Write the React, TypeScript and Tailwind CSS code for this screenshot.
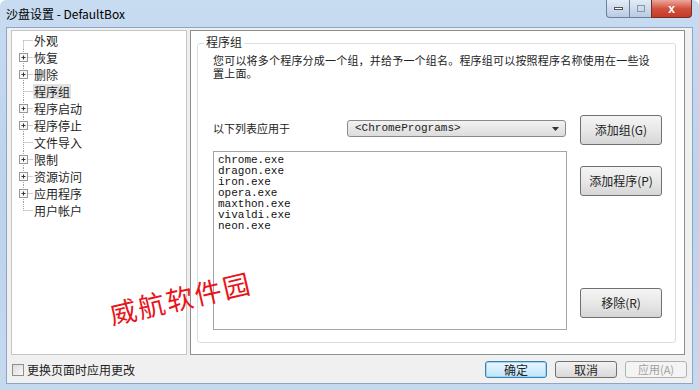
import { useState } from 'react';

const cjk = "font-['Noto_Sans_CJK_SC',sans-serif]";
const mono = "font-['Liberation_Mono','Noto_Sans_CJK_SC',monospace]";

type TreeItem = { label: string; plus: boolean };

const treeItems: TreeItem[] = [
    { label: '外观', plus: false },
    { label: '恢复', plus: true },
    { label: '删除', plus: true },
    { label: '程序组', plus: false },
    { label: '程序启动', plus: true },
    { label: '程序停止', plus: true },
    { label: '文件导入', plus: false },
    { label: '限制', plus: true },
    { label: '资源访问', plus: true },
    { label: '应用程序', plus: true },
    { label: '用户帐户', plus: false },
];

const programs = ['chrome.exe', 'dragon.exe', 'iron.exe', 'opera.exe', 'maxthon.exe', 'vivaldi.exe', 'neon.exe'];

// Tree connector lines + expand box
const TreeGlyph = ({ first, last, plus }: { first: boolean; last: boolean; plus: boolean }) => (
    <svg width="20" height="17" viewBox="0 0 20 17" className="shrink-0">
        <line x1="10.5" y1={first ? 8.5 : 0} x2="10.5" y2={last ? 8.5 : 17} stroke="#a0a0a0" strokeDasharray="1 1" />
        <line x1="10.5" y1="8.5" x2="20" y2="8.5" stroke="#a0a0a0" strokeDasharray="1 1" />
        {plus && (
            <g>
                <rect x="6.5" y="4.5" width="8" height="8" fill="#f7f7f7" stroke="#989898" />
                <line x1="8.5" y1="8.5" x2="12.5" y2="8.5" stroke="#333" />
                <line x1="10.5" y1="6.5" x2="10.5" y2="10.5" stroke="#333" />
            </g>
        )}
    </svg>
);

const WinButton = ({ label, className = '' }: { label: string; className?: string }) => (
    <button className={`w-[82px] h-[30px] rounded-[3px] border border-[#707070] bg-gradient-to-b from-[#f4f4f4] via-[#e8e8e8] to-[#d6d6d6] text-[12px] text-[#222] ${cjk} ${className}`}>
        {label}
    </button>
);

export default function App() {
    const [selected, setSelected] = useState('程序组');
    const [applyOnSwitch, setApplyOnSwitch] = useState(false);

    return (
        <div className="relative w-[699px] h-[390px] overflow-hidden bg-gradient-to-b from-[#c7dbf1] via-[#bcd3ec] to-[#c6d9ef] rounded-t-[6px]">
            {/* Title bar */}
            <div className={`h-[27px] pl-[6px] pt-[5px] text-[12px] text-black ${cjk}`}>沙盘设置 - DefaultBox</div>

            {/* Caption buttons */}
            <div className="absolute top-0 right-[7px] flex h-[18px]">
                <div className="w-[24px] h-full border border-[#6d7f99] border-t-0 rounded-bl-[4px] bg-gradient-to-b from-[#e3ecf7] to-[#b9cbe2] flex items-center justify-center">
                    <div className="w-[9px] h-[3px] border border-[#555] bg-white" />
                </div>
                <div className="w-[21px] h-full border-y border-[#6d7f99] border-t-0 bg-gradient-to-b from-[#e3ecf7] to-[#b9cbe2] flex items-center justify-center">
                    <div className="w-[8px] h-[7px] border border-[#8a98ad]" />
                </div>
                <div className="w-[41px] h-full border border-[#7a2b22] border-t-0 rounded-br-[4px] bg-gradient-to-b from-[#e9a79c] via-[#d2513e] to-[#c43a26] flex items-center justify-center">
                    <span className="text-white text-[12px] font-bold leading-none font-['Liberation_Sans',sans-serif]">x</span>
                </div>
            </div>

            {/* Client area */}
            <div className="mx-[6px] h-[357px] bg-[#f0f0f0] border border-[#8ea6c4] flex flex-col">
                <div className="flex pt-[2px] pl-[4px] gap-[3px]">
                    {/* Tree */}
                    <div className={`w-[176px] h-[325px] bg-white border border-[#c6c6c6] pt-[1px] pl-[1px] text-[12px] ${cjk}`}>
                        {treeItems.map((item, i) => (
                            <div key={item.label} className="flex items-center h-[17px] cursor-default" onClick={() => setSelected(item.label)}>
                                <TreeGlyph first={i === 0} last={i === treeItems.length - 1} plus={item.plus} />
                                <span className={`px-[1px] leading-[15px] text-[#1e1e1e] ${selected === item.label ? 'bg-[#e3e3e3]' : ''}`}>{item.label}</span>
                            </div>
                        ))}
                    </div>

                    {/* Right page */}
                    <div className="w-[495px] h-[325px] bg-white border border-[#8e8f8f] pt-[12px] pl-[6px] pr-[8px]">
                        <div className="relative h-[300px] border border-[#d5dfe5] rounded-[3px] flex flex-col pl-[15px] pr-[12px]">
                            <span className={`absolute -top-[9px] left-[6px] bg-white px-[2px] text-[12px] leading-[14px] text-[#1e1e1e] ${cjk}`}>程序组</span>

                            <div className={`mt-[10px] h-[26px] whitespace-nowrap text-[11px] leading-[13px] tracking-[0.2px] text-[#222] ${cjk}`}>
                                <div>您可以将多个程序分成一个组，并给予一个组名。程序组可以按照程序名称使用在一些设</div>
                                <div>置上面。</div>
                            </div>

                            <div className="flex">
                                <div className="w-[354px] flex flex-col">
                                    <div className="mt-[40px] flex items-center h-[17px]">
                                        <span className={`w-[134px] text-[11px] text-[#222] ${cjk}`}>以下列表应用于</span>
                                        <div className="w-[219px] h-[17px] rounded-[3px] border border-[#8a8a8a] bg-gradient-to-b from-[#f3f3f3] to-[#dcdcdc] flex items-center pl-[7px] pr-[6px]">
                                            <span className={`flex-1 text-[11px] leading-none text-[#222] ${mono}`}>&lt;ChromePrograms&gt;</span>
                                            <svg width="7" height="4" viewBox="0 0 7 4"><path d="M0 0h7L3.5 4z" fill="#333" /></svg>
                                        </div>
                                    </div>

                                    <div className={`mt-[14px] h-[179px] border border-[#a5a5a5] bg-white pl-[4px] pt-[3px] text-[11px] leading-[11px] text-[#111] ${mono}`}>
                                        {programs.map((p) => (
                                            <div key={p}>{p}</div>
                                        ))}
                                    </div>
                                </div>

                                <div className="ml-[13px] flex flex-col">
                                    <WinButton label="添加组(G)" className="mt-[35px]" />
                                    <WinButton label="添加程序(P)" className="mt-[21px]" />
                                    <WinButton label="移除(R)" className="mt-[92px]" />
                                </div>
                            </div>
                        </div>
                    </div>
                </div>

                {/* Bottom bar */}
                <div className="flex items-center mt-[6px] pl-[5px] pr-[5px] h-[17px]">
                    <label className={`flex items-center gap-[3px] text-[12px] text-[#222] ${cjk}`}>
                        <span
                            className="w-[12px] h-[12px] border border-[#8f8f8f] bg-gradient-to-br from-[#dcdcdc] to-[#f8f8f8]"
                            onClick={() => setApplyOnSwitch(!applyOnSwitch)}
                        />
                        更换页面时应用更改
                    </label>
                    <div className="flex-1" />
                    <button className={`w-[62px] h-[17px] rounded-[3px] border border-[#3c7fb1] bg-gradient-to-b from-[#eaf6fd] to-[#bee6fd] text-[12px] leading-none text-[#222] shadow-[inset_0_0_0_1px_#9fd5f5] ${cjk}`}>确定</button>
                    <button className={`ml-[8px] w-[62px] h-[17px] rounded-[3px] border border-[#707070] bg-gradient-to-b from-[#f2f2f2] to-[#d9d9d9] text-[12px] leading-none text-[#222] ${cjk}`}>取消</button>
                    <button className={`ml-[8px] w-[62px] h-[17px] rounded-[3px] border border-[#adb2b5] bg-[#f4f4f4] text-[11px] leading-none text-[#a0a0a0] ${cjk}`}>应用(A)</button>
                </div>
            </div>

            {/* Watermark */}
            <div className={`absolute left-[108px] top-[278px] -rotate-[13deg] text-[27px] tracking-[2px] text-[#e8141a] ${cjk}`}>
                威航软件园
            </div>
        </div>
    );
}
